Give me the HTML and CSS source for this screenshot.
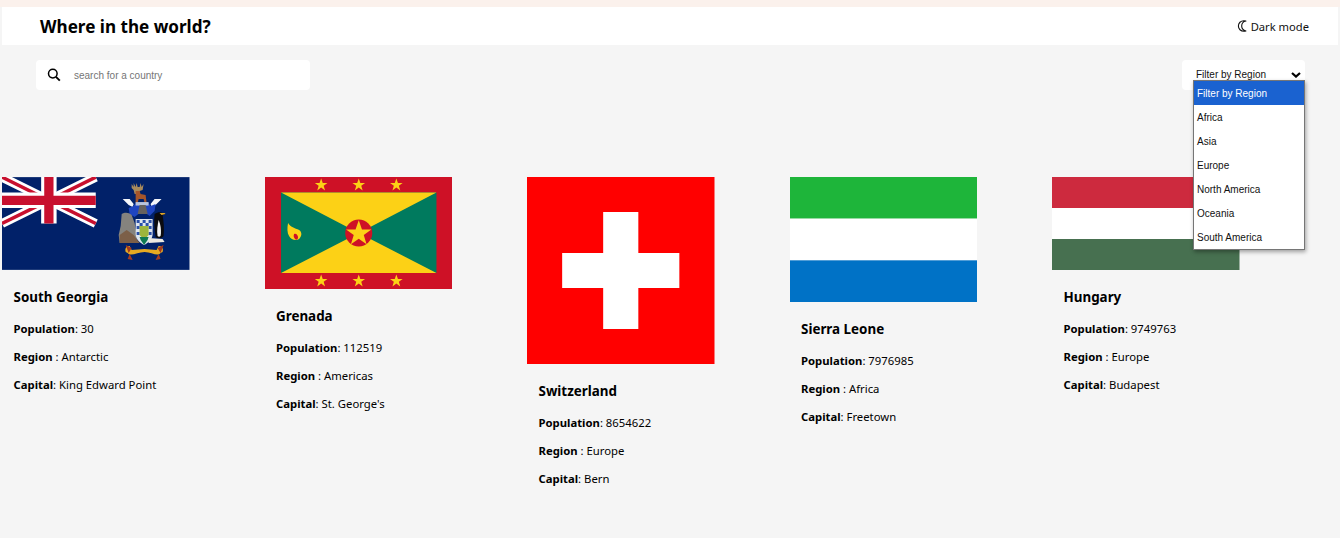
FILE: index.html
```html
<!DOCTYPE html>
<html lang="en">
<head>
<meta charset="utf-8">
<title>Where in the world?</title>
<link rel="stylesheet" href="styles.css">
</head>
<body>
<header class="site-header">
  <h1 class="site-title">Where in the world?</h1>
  <button class="mode-toggle" type="button">
    <svg class="moon" viewBox="0 0 12 14" aria-hidden="true"><path d="M8.6 1.2C5.2 1.2 2.6 3.8 2.6 7s2.6 5.8 6 5.8c.9 0 1.6-.2 2.2-.4-2.6-.6-4.6-2.8-4.6-5.4s2-4.8 4.6-5.4c-.6-.2-1.3-.4-2.2-.4z" fill="none" stroke="#111" stroke-width="1.2" stroke-linejoin="round"/></svg>
    <span>Dark mode</span>
  </button>
</header>

<section class="toolbar">
  <div class="search">
    <svg class="search-icon" viewBox="0 0 14 14" aria-hidden="true"><circle cx="5.8" cy="5.6" r="4.3" fill="none" stroke="#000" stroke-width="1.5"/><path d="M9 8.8l3.8 3.9" stroke="#000" stroke-width="1.9" fill="none"/></svg>
    <span class="search-placeholder">search for a country</span>
  </div>
  <div class="filter">
    <div class="filter-value">
      <span>Filter by Region</span>
      <svg class="chevron" viewBox="0 0 10 6" aria-hidden="true"><path d="M1 1l4 3.6L9 1" fill="none" stroke="#000" stroke-width="2.2"/></svg>
    </div>
    <ul class="filter-menu">
      <li class="filter-option selected">Filter by Region</li>
      <li class="filter-option">Africa</li>
      <li class="filter-option">Asia</li>
      <li class="filter-option">Europe</li>
      <li class="filter-option">North America</li>
      <li class="filter-option">Oceania</li>
      <li class="filter-option">South America</li>
    </ul>
  </div>
</section>

<main class="countries">
  <article class="card">
    <svg class="flag flag-sgs" viewBox="0 0 188 93" aria-hidden="true">
      <rect width="188" height="93" fill="#012169"/>
      <path d="M0 0L94 46.5M94 0L0 46.5" stroke="#fff" stroke-width="9"/>
      <path d="M0 0L47 23.25M94 46.5L47 23.25M94 0L47 23.25M0 46.5L47 23.25" stroke="#c8102e" stroke-width="3.5"/>
      <path d="M47 0V46.5M0 23.25H94" stroke="#fff" stroke-width="15.5"/>
      <path d="M47 0V46.5M0 23.25H94" stroke="#c8102e" stroke-width="9.3"/>
      <path d="M130 7l2 3 0-4 2 4 1-4 1 4 2 0 1-4 1 4 2-3-1 6-3 1-1 3h-4l-1-4-2-2z" fill="#a88a5c"/>
      <path d="M134 14h4l1 3 5 1 1 8h-2l-1-4h-5l-1 4h-2v-8z" fill="#a5562b"/>
      <path d="M121 22l7 0 4 5-1 3-4-2-3-3zM160 22l-7 0-4 5 1 3 4-2 3-3z" fill="#f4f6fa"/>
      <path d="M127 31l5-2 2-3h13l2 3 5-2-1 7-5 5-4-3-6 0-5 4-5-3z" fill="#1f45c0"/>
      <rect x="134" y="25" width="13" height="3.5" fill="#b9c4dc"/>
      <path d="M138 28h6l2 9h-10z" fill="#66625e"/>
      <path d="M120 37c3-2 7-2 10 1l3 8 2 12v8h-17l-1-8 2-9z" fill="#85837e"/>
      <path d="M118 58l7-5 7 5 6 8h-20z" fill="#7c5f48"/>
      <path d="M134 42h17v15c0 6-5 9-8.500 11-3.500-2-8.500-5-8.500-11z" fill="#dfe6ee"/>
      <path d="M135 43h3v3h-3zM141 43h3v3h-3zM147 43h3v3h-3zM138 46h3v3h-3zM144 46h3v3h-3zM135 49h3v3h-3zM147 49h3v3h-3zM135 55h3v3h-3zM147 55h3v3h-3z" fill="#2a4fa8"/>
      <path d="M138 49h9v9l-4.500 5-4.500-5z" fill="#9db53c"/>
      <path d="M138 60h9l-1 3-3.500 5-3.500-5z" fill="#0e7a53"/>
      <path d="M153 37c3-2 6-2 8-1l3 1-3 1c1 6 2 14 1 21-2 3-6 3-8 1-1-8-2-16-1-23z" fill="#0b0b0e"/>
      <path d="M157 43c2 4 3 11 2 16-1 1-2 1-3 0-1-5 0-11 1-16z" fill="#f4f4f4"/>
      <path d="M158 36h5l1 1-4 1z" fill="#e0a526"/>
      <path d="M147 61l14 1 2 3-16 1z" fill="#ece9e0"/>
      <path d="M128 69c-4 0-5 3-4 6l2 1c3 4 10-1 17-1s13 5 16 1l2-1c1-3 0-6-4-6l-2 4c-4 0-8-1-12-1s-9 1-13 1z" fill="#e6aa22"/>
      <path d="M124 68l6 3-3 5zM162 68l-6 3 3 5zM128 77l3 6-5-1zM157 77l-3 6 5-1z" fill="#a33a20"/>
    </svg>
    <div class="card-body">
      <h2 class="card-name">South Georgia</h2>
      <p class="card-line"><b>Population</b>: 30</p>
      <p class="card-line"><b>Region</b> : Antarctic</p>
      <p class="card-line"><b>Capital</b>: King Edward Point</p>
    </div>
  </article>

  <article class="card">
    <svg class="flag flag-grd" viewBox="0 0 187 112" preserveAspectRatio="none" aria-hidden="true">
      <defs><path id="star" d="M0-6.6L1.6-2H6.3L2.500.8 3.900 5.400 0 2.600-3.900 5.400-2.500.8-6.300-2H-1.600z"/></defs>
      <rect width="187" height="112" fill="#ce1126"/>
      <rect x="16" y="15.5" width="155" height="80.5" fill="#007a5e"/>
      <path d="M16 15.500H171L93.500 56zM16 96H171L93.500 56z" fill="#fcd116"/>
      <circle cx="93.5" cy="56" r="13.5" fill="#ce1126"/>
      <g fill="#fcd116">
        <use href="#star" transform="translate(93.500 56.500) scale(2)"/>
        <use href="#star" x="56" y="8"/><use href="#star" x="93.5" y="8"/><use href="#star" x="131" y="8"/>
        <use href="#star" x="56" y="104"/><use href="#star" x="93.5" y="104"/><use href="#star" x="131" y="104"/>
      </g>
      <path d="M23 46c-1 5-1 10 1 13 2 4 7 5 10 3 3-3 3-7 0-9-4-2-9-3-11-7z" fill="#fcd116"/>
      <path d="M29 57c2-1 4 1 4 4-1 2-2 2-3 1-1-1-2-3-1-5z" fill="#ce1126"/>
    </svg>
    <div class="card-body">
      <h2 class="card-name">Grenada</h2>
      <p class="card-line"><b>Population</b>: 112519</p>
      <p class="card-line"><b>Region</b> : Americas</p>
      <p class="card-line"><b>Capital</b>: St. George's</p>
    </div>
  </article>

  <article class="card">
    <svg class="flag flag-che" viewBox="0 0 32 32" preserveAspectRatio="none" aria-hidden="true">
      <rect width="32" height="32" fill="#f00"/>
      <path d="M13 6h6v7h7v6h-7v7h-6v-7H6v-6h7z" fill="#fff"/>
    </svg>
    <div class="card-body">
      <h2 class="card-name">Switzerland</h2>
      <p class="card-line"><b>Population</b>: 8654622</p>
      <p class="card-line"><b>Region</b> : Europe</p>
      <p class="card-line"><b>Capital</b>: Bern</p>
    </div>
  </article>

  <article class="card">
    <svg class="flag flag-sle" viewBox="0 0 3 3" preserveAspectRatio="none" aria-hidden="true">
      <rect width="3" height="1" fill="#1eb53a"/>
      <rect y="1" width="3" height="1" fill="#fff"/>
      <rect y="2" width="3" height="1" fill="#0072c6"/>
    </svg>
    <div class="card-body">
      <h2 class="card-name">Sierra Leone</h2>
      <p class="card-line"><b>Population</b>: 7976985</p>
      <p class="card-line"><b>Region</b> : Africa</p>
      <p class="card-line"><b>Capital</b>: Freetown</p>
    </div>
  </article>

  <article class="card">
    <svg class="flag flag-hun" viewBox="0 0 3 3" preserveAspectRatio="none" aria-hidden="true">
      <rect width="3" height="1" fill="#cd2a3e"/>
      <rect y="1" width="3" height="1" fill="#fff"/>
      <rect y="2" width="3" height="1" fill="#477050"/>
    </svg>
    <div class="card-body">
      <h2 class="card-name">Hungary</h2>
      <p class="card-line"><b>Population</b>: 9749763</p>
      <p class="card-line"><b>Region</b> : Europe</p>
      <p class="card-line"><b>Capital</b>: Budapest</p>
    </div>
  </article>
</main>
</body>
</html>
```
FILE: styles.css
```css
* { box-sizing: border-box; }

html, body { height: 100%; }

body {
  margin: 0;
  padding-top: 7px;
  background: linear-gradient(#fbf1ec 0 7px, #f5f5f5 7px);
  color: #000;
  font-family: "Noto Sans", "Open Sans", sans-serif;
  overflow: hidden;
}

.site-header {
  display: flex;
  align-items: center;
  justify-content: space-between;
  height: 38px;
  margin: 0 2px;
  padding: 0 29px 0 38px;
  background: #fff;
}

.site-title {
  margin: 0;
  padding-top: 1px;
  font-size: 17.1px;
  font-weight: 700;
  line-height: 38px;
}

.mode-toggle {
  display: flex;
  align-items: center;
  gap: 4px;
  padding: 0;
  border: 0;
  background: none;
  color: #111;
  font: 11.2px "Noto Sans", sans-serif;
}

.moon { width: 11px; height: 14px; }

.toolbar {
  display: flex;
  justify-content: space-between;
  align-items: flex-start;
  padding: 15px 35px 0 36px;
}

.search {
  display: flex;
  align-items: center;
  width: 274px;
  height: 30px;
  padding-left: 11px;
  gap: 14px;
  background: #fff;
  border-radius: 4px;
}

.search-icon { width: 14px; height: 14px; }

.search-placeholder {
  margin-left: -1px;
  color: #757575;
  font: 10px "Liberation Sans", Arial, sans-serif;
}

.filter {
  position: relative;
  width: 123px;
  height: 30px;
  background: #fff;
  border-radius: 4px;
}

.filter-value {
  display: flex;
  justify-content: space-between;
  align-items: flex-start;
  height: 30px;
  padding: 9px 4px 0 14px;
  color: #111;
  font: 10px/11px "Liberation Sans", Arial, sans-serif;
}

.chevron { width: 10px; height: 6px; margin-top: 3px; }

.filter-menu {
  position: absolute;
  top: 20px;
  left: 11px;
  z-index: 2;
  width: 112px;
  margin: 0;
  padding: 0;
  list-style: none;
  background: #fff;
  border: 1px solid #767676;
  box-shadow: 1px 2px 4px rgba(0, 0, 0, .35);
  font: 10px "Liberation Sans", Arial, sans-serif;
  color: #111;
}

.filter-option {
  height: 24px;
  line-height: 25px;
  padding-left: 3px;
  white-space: nowrap;
}

.filter-option.selected {
  background: #1a62d0;
  color: #fff;
}

.countries {
  display: flex;
  align-items: flex-start;
  gap: 75px;
  margin: 87px 0 0 2px;
}

.card { width: 187.5px; flex: none; }

.flag { display: block; width: 187.5px; }
.flag-sgs, .flag-hun { height: 93px; }
.flag-grd { height: 112px; }
.flag-che { height: 187px; }
.flag-sle { height: 125px; }

.card-body { padding: 17px 0 0 11.5px; }

.card-name {
  margin: 0 0 13px;
  font-size: 13.4px;
  font-weight: 700;
  line-height: 20px;
}

.card-line {
  margin: 0 0 10px;
  font-size: 11.3px;
  line-height: 18px;
}
```
